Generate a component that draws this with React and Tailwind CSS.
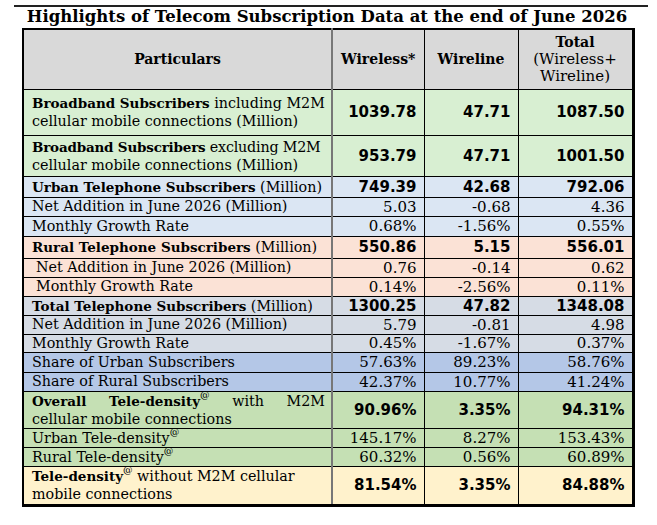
import React from 'react';

const serif = "font-['DejaVu_Serif',serif]";
const sans = "font-['DejaVu_Sans',sans-serif]";

const At = () => <sup className="text-[9.5px] font-normal leading-none align-[3px]">@</sup>;
const B = ({ children }) => <b className="text-[13.5px]">{children}</b>;

const rows = [
	{
		bg: 'bg-[#d8efd2]',
		h: 'h-[46px]',
		label: (
			<>
				<div className="whitespace-nowrap">
					<B>Broadband Subscribers</B> including M2M
				</div>
				<div>cellular mobile connections (Million)</div>
			</>
		),
		vals: ['1039.78', '47.71', '1087.50'],
		bold: true,
	},
	{
		bg: 'bg-[#d8efd2]',
		h: 'h-[41px]',
		label: (
			<>
				<div className="whitespace-nowrap tracking-[-0.2px]">
					<B>Broadband Subscribers</B> excluding M2M
				</div>
				<div>cellular mobile connections (Million)</div>
			</>
		),
		vals: ['953.79', '47.71', '1001.50'],
		bold: true,
	},
	{
		bg: 'bg-[#dbe6f3]',
		h: 'h-[21px]',
		label: (
			<>
				<B>Urban Telephone Subscribers</B> (Million)
			</>
		),
		vals: ['749.39', '42.68', '792.06'],
		bold: true,
	},
	{ bg: 'bg-[#dbe6f3]', h: 'h-[19px]', label: 'Net Addition in June 2026 (Million)', vals: ['5.03', '-0.68', '4.36'] },
	{ bg: 'bg-[#dbe6f3]', h: 'h-[20px]', label: 'Monthly Growth Rate', vals: ['0.68%', '-1.56%', '0.55%'] },
	{
		bg: 'bg-[#fbe2d6]',
		h: 'h-[22px]',
		label: (
			<>
				<B>Rural Telephone Subscribers</B> (Million)
			</>
		),
		vals: ['550.86', '5.15', '556.01'],
		bold: true,
	},
	{ bg: 'bg-[#fbe2d6]', h: 'h-[19px]', label: 'Net Addition in June 2026 (Million)', vals: ['0.76', '-0.14', '0.62'], indent: true },
	{ bg: 'bg-[#fbe2d6]', h: 'h-[19px]', label: 'Monthly Growth Rate', vals: ['0.14%', '-2.56%', '0.11%'], indent: true },
	{
		bg: 'bg-[#d6dce5]',
		h: 'h-[19px]',
		label: (
			<>
				<B>Total Telephone Subscribers</B> (Million)
			</>
		),
		vals: ['1300.25', '47.82', '1348.08'],
		bold: true,
	},
	{ bg: 'bg-[#d6dce5]', h: 'h-[19px]', label: 'Net Addition in June 2026 (Million)', vals: ['5.79', '-0.81', '4.98'] },
	{ bg: 'bg-[#d6dce5]', h: 'h-[18px]', label: 'Monthly Growth Rate', vals: ['0.45%', '-1.67%', '0.37%'] },
	{ bg: 'bg-[#b4c7e7]', h: 'h-[20px]', label: 'Share of Urban Subscribers', vals: ['57.63%', '89.23%', '58.76%'] },
	{ bg: 'bg-[#b4c7e7]', h: 'h-[19px]', label: 'Share of Rural Subscribers', vals: ['42.37%', '10.77%', '41.24%'] },
	{
		bg: 'bg-[#c5e0b4]',
		h: 'h-[36px]',
		label: (
			<>
				<div className="text-justify [text-align-last:justify] whitespace-nowrap flex justify-between">
					<span>
						<B>Overall</B>
					</span>
					<span>
						<B>Tele-density</B>
						<At />
					</span>
					<span>with</span>
					<span>M2M</span>
				</div>
				<div>cellular mobile connections</div>
			</>
		),
		vals: ['90.96%', '3.35%', '94.31%'],
		bold: true,
	},
	{
		bg: 'bg-[#c5e0b4]',
		h: 'h-[19px]',
		label: (
			<>
				Urban Tele-density
				<At />
			</>
		),
		vals: ['145.17%', '8.27%', '153.43%'],
	},
	{
		bg: 'bg-[#c5e0b4]',
		h: 'h-[19px]',
		label: (
			<>
				Rural Tele-density
				<At />
			</>
		),
		vals: ['60.32%', '0.56%', '60.89%'],
	},
	{
		bg: 'bg-[#fff2cc]',
		h: 'h-[39px]',
		label: (
			<>
				<div className="whitespace-nowrap">
					<B>Tele-density</B>
					<At /> without M2M cellular
				</div>
				<div>mobile connections</div>
			</>
		),
		vals: ['81.54%', '3.35%', '84.88%'],
		bold: true,
		last: true,
	},
];

const App = () => {
	return (
		<div className={`w-[657px] h-[525px] bg-white ${serif} text-black`}>
			<div className="pt-[5px] pl-[14px]">
				<div className="w-[634px] border-t-2 border-[#222]" />
			</div>
			<div className="pl-[22px] w-[632px]">
				<div className="text-center font-bold text-[16.5px] leading-[20px] h-[21px] whitespace-nowrap">
					Highlights of Telecom Subscription Data at the end of June 2026
				</div>
				<table className="table-fixed border-collapse w-[610px] text-[14.3px] leading-[17px]">
					<colgroup>
						<col className="w-[309px]" />
						<col className="w-[92px]" />
						<col className="w-[94px]" />
						<col className="w-[115px]" />
					</colgroup>
					<thead>
						<tr className="bg-[#d9d9d9] h-[60px]">
							<th className="border-l-2 border-t-2 border-b border-black border-r-2 border-r-[#777] text-[14px]">
								Particulars
							</th>
							<th className="border-t-2 border-b border-r border-black text-[14px]">Wireless*</th>
							<th className="border-t-2 border-b border-r border-black text-[14px]">Wireline</th>
							<th className="border-t-2 border-b border-r-[3px] border-black font-normal leading-[17px] text-[15px]">
								<div className="font-bold text-[14px]">Total</div>
								<div>(Wireless+</div>
								<div>Wireline)</div>
							</th>
						</tr>
					</thead>
					<tbody>
						{rows.map((r, i) => (
							<tr key={i} className={`${r.bg} ${r.h}`}>
								<td
									className={`border-l-2 border-black border-r-2 border-r-[#777] ${
										r.last ? 'border-b-[3px]' : 'border-b'
									} ${r.indent ? 'pl-[12px]' : 'pl-[8px]'} pr-[6px] py-0 align-middle text-left ${
										typeof r.label === 'string' ? '' : 'leading-[18px]'
									}`}>
									{r.label}
								</td>
								{r.vals.map((v, j) => (
									<td
										key={j}
										className={`border-black ${j === 2 ? 'border-r-[3px]' : 'border-r'} ${
											r.last ? 'border-b-[3px]' : 'border-b'
										} text-right pr-[7px] py-0 align-middle whitespace-nowrap leading-[16px] ${
											r.bold ? `${sans} font-bold text-[15px]` : 'text-[15px]'
										}`}>
										{v}
									</td>
								))}
							</tr>
						))}
					</tbody>
				</table>
			</div>
		</div>
	);
};

export default App;
